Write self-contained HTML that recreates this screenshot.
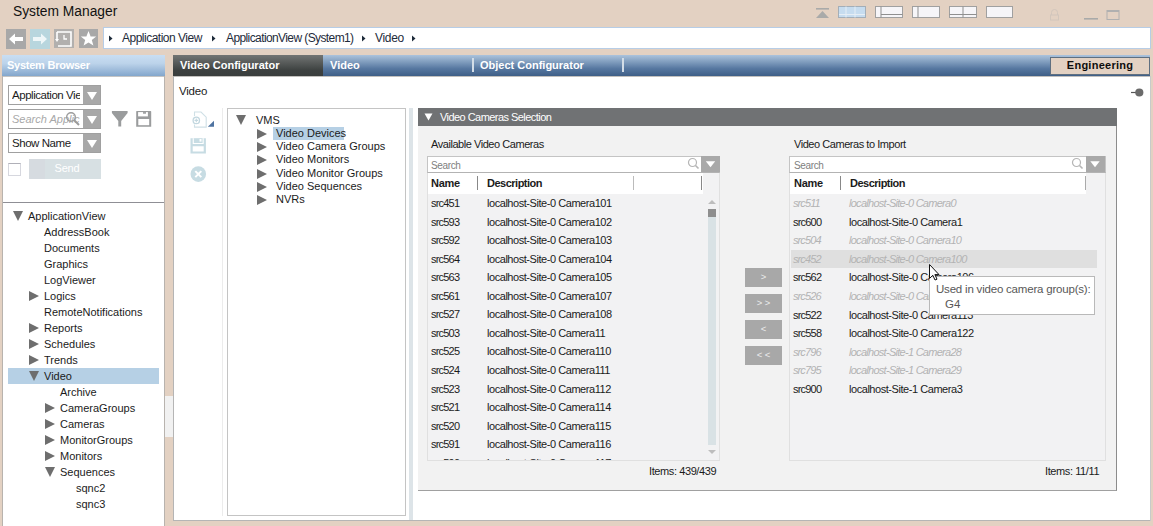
<!DOCTYPE html>
<html><head><meta charset="utf-8">
<style>
*{margin:0;padding:0;box-sizing:border-box}
html,body{width:1153px;height:526px;overflow:hidden}
body{background:#e3d1c2;font-family:"Liberation Sans",sans-serif;color:#1b1b1b;position:relative}
.a{position:absolute}
.t{position:absolute;white-space:nowrap;font-size:11px;line-height:13px}
.tri-r{position:absolute;width:0;height:0;border-top:5.5px solid transparent;border-bottom:5.5px solid transparent;border-left:10px solid #6e6e6e}
.tri-d{position:absolute;width:0;height:0;border-left:5.5px solid transparent;border-right:5.5px solid transparent;border-top:10px solid #6e6e6e}
.gbtn{position:absolute;background:#a8a8a8}
.combo{position:absolute;background:#fff;border:1px solid #a0a0a0}
.combo .dd{position:absolute;right:0;top:0;bottom:0;width:17px;background:#a8a8a8}
.combo .dd:after{content:"";position:absolute;left:3.5px;top:6px;border-left:5px solid transparent;border-right:5px solid transparent;border-top:8px solid #fff}
.row{position:absolute;left:0;height:18px;font-size:11px;line-height:18px;white-space:nowrap;letter-spacing:-0.45px}
.nm{letter-spacing:-0.8px}
.it .nm{letter-spacing:-0.9px}
.it{font-style:italic;color:#b3b3b3;letter-spacing:-0.72px}
</style></head><body>

<!-- Title -->
<div class="t" style="left:13px;top:3px;font-size:13.8px;line-height:17px;color:#111">System Manager</div>

<!-- top-right icons -->
<svg class="a" style="left:814px;top:6px" width="320" height="16" viewBox="0 0 320 16">
  <rect x="2" y="2" width="13" height="1.6" fill="#a9aaa9"/>
  <path d="M2 12 L8.5 5 L15 12 Z" fill="#a9aaa9"/>
  <rect x="24.5" y="0.5" width="27" height="11" fill="#c6dcef" stroke="#a3aeb8"/>
  <line x1="32" y1="0.5" x2="32" y2="11.5" stroke="#e6eef5"/>
  <line x1="41" y1="0.5" x2="41" y2="11.5" stroke="#e6eef5"/>
  <line x1="25" y1="8.5" x2="51" y2="8.5" stroke="#e6eef5"/>
  <rect x="61.5" y="0.5" width="27" height="11" fill="#f6f5f8" stroke="#a0a0a0"/>
  <line x1="67" y1="0.5" x2="67" y2="11.5" stroke="#8f8f8f"/>
  <line x1="67" y1="8.5" x2="88.5" y2="8.5" stroke="#8f8f8f"/>
  <rect x="98.5" y="0.5" width="27" height="11" fill="#f6f5f8" stroke="#a0a0a0"/>
  <line x1="104" y1="0.5" x2="104" y2="11.5" stroke="#8f8f8f"/>
  <rect x="135.5" y="0.5" width="27" height="11" fill="#f6f5f8" stroke="#a0a0a0"/>
  <line x1="149" y1="0.5" x2="149" y2="11.5" stroke="#8f8f8f"/>
  <line x1="135.5" y1="8.5" x2="162.5" y2="8.5" stroke="#8f8f8f"/>
  <rect x="172.5" y="0.5" width="26" height="11" fill="#f6f5f8" stroke="#a0a0a0"/>
  <path d="M237.5 9 v-2.5 a3 3 0 0 1 6 0 v2.5" fill="none" stroke="#d2c6bc" stroke-width="1"/>
  <rect x="236.5" y="9" width="8" height="5" fill="none" stroke="#d2c6bc"/>
  <rect x="270" y="12" width="14" height="1.6" fill="#a9aaa9"/>
  <rect x="293" y="4.5" width="12" height="9" fill="none" stroke="#b0b0b0"/>
  <rect x="293" y="4" width="12" height="2" fill="#b0b0b0"/>
</svg>

<!-- nav buttons -->
<div class="gbtn" style="left:6px;top:29px;width:20px;height:20px"></div>
<svg class="a" style="left:6px;top:29px" width="20" height="20"><path d="M3 10 L9 4.5 V8 H17 V12 H9 V15.5 Z" fill="#fff"/></svg>
<div class="gbtn" style="left:30px;top:29px;width:20px;height:20px;background:#b8d6de"></div>
<svg class="a" style="left:30px;top:29px" width="20" height="20"><path d="M17 10 L11 4.5 V8 H3 V12 H11 V15.5 Z" fill="#eef6f8"/></svg>
<div class="gbtn" style="left:54px;top:29px;width:20px;height:19px;background:#b2b0ae"></div>
<svg class="a" style="left:54px;top:29px" width="20" height="20"><path d="M3 3 H17 V17 H4" fill="none" stroke="#fff" stroke-width="1.6"/><path d="M3 3 V11" stroke="#fff" stroke-width="1.6"/><path d="M1 10 L5 10 L3 13Z" fill="#fff"/><path d="M10 6 V10 H13" fill="none" stroke="#fff" stroke-width="1.3"/></svg>
<div class="gbtn" style="left:79px;top:29px;width:19px;height:19px"></div>
<svg class="a" style="left:79px;top:29px" width="19" height="19"><path d="M9.5 2 L11.6 7.4 L17.2 7.5 L12.8 11 L14.4 16.6 L9.5 13.4 L4.6 16.6 L6.2 11 L1.8 7.5 L7.4 7.4 Z" fill="#fff"/></svg>

<!-- address bar -->
<div class="a" style="left:103px;top:27px;width:1048px;height:22px;background:#fff;border:1px solid #b7cde6"></div>
<svg class="a" style="left:107px;top:34px" width="310" height="9">
  <path d="M2 1.5 L5.5 4.5 L2 7.5Z" fill="#1d2a3a"/>
  <path d="M105 1.5 L108.5 4.5 L105 7.5Z" fill="#1d2a3a"/>
  <path d="M255 1.5 L258.5 4.5 L255 7.5Z" fill="#1d2a3a"/>
  <path d="M305 1.5 L308.5 4.5 L305 7.5Z" fill="#1d2a3a"/>
</svg>
<div class="t" style="left:122px;top:31px;font-size:12px;line-height:14px;letter-spacing:-0.5px;color:#1e2b3b">Application View</div>
<div class="t" style="left:226px;top:31px;font-size:12px;line-height:14px;letter-spacing:-0.6px;color:#1e2b3b">ApplicationView (System1)</div>
<div class="t" style="left:375px;top:31px;font-size:12px;line-height:14px;letter-spacing:-0.3px;color:#1e2b3b">Video</div>

<!-- ============ System Browser ============ -->
<div class="a" style="left:2px;top:55px;width:163px;height:21px;background:linear-gradient(#c9def3 0%,#bcd3ea 40%,#83a6cc 100%)"></div>
<div class="t" style="left:7px;top:58px;font-size:11px;line-height:14px;font-weight:bold;color:#fff;letter-spacing:-0.25px">System Browser</div>
<div class="a" style="left:2px;top:76px;width:163px;height:460px;background:#fff;border-left:1px solid #b8b3ae;border-right:1px solid #b8b3ae"></div>

<div class="a" style="left:3px;top:76px;width:161px;height:1px;background:#c4c4c4"></div>
<div class="combo" style="left:8px;top:85px;width:93px;height:20px"><div class="dd"></div></div>
<div class="t" style="left:12px;top:88px;font-size:11.5px;line-height:14px;letter-spacing:-0.45px;width:68px;overflow:hidden">Application View</div>
<div class="combo" style="left:8px;top:109px;width:93px;height:20px"><div class="dd"></div></div>
<div class="t" style="left:12px;top:112px;font-size:11px;line-height:14px;font-style:italic;color:#a8a8a8;width:70px;overflow:hidden">Search Applic</div>
<svg class="a" style="left:64px;top:110px" width="18" height="18"><circle cx="7" cy="7" r="4.3" fill="none" stroke="#9c9c9c" stroke-width="1.4"/><path d="M10 10 L15 15" stroke="#9c9c9c" stroke-width="2"/></svg>
<svg class="a" style="left:111px;top:111px" width="42" height="17">
  <path d="M0.9 0 H16.6 V2 L10.2 10 V15.6 H7.3 V10 L0.9 2 Z" fill="#9a9c9d"/>
  <path d="M25.6 0 H39.6 L40.2 0.6 V15.8 H25.2 V0.4 Z" fill="#9a9c9d"/>
  <rect x="27.1" y="1.1" width="9.8" height="4.3" fill="#fff"/>
  <rect x="32" y="1.1" width="3" height="1.6" fill="#9a9c9d"/>
  <rect x="27.3" y="8" width="10.9" height="6.2" fill="#fff"/>
</svg>
<div class="combo" style="left:8px;top:133px;width:93px;height:20px"><div class="dd"></div></div>
<div class="t" style="left:12px;top:136px;font-size:11.5px;line-height:14px;letter-spacing:-0.45px">Show Name</div>
<div class="a" style="left:8px;top:163px;width:13px;height:13px;border:1px solid #d6d7de;border-top-color:#b0b0b8;background:#fff"></div>
<div class="a" style="left:29px;top:159px;width:72px;height:20px;background:linear-gradient(90deg,#d6dbe0 22%,#d7e0e3 22%)"></div>
<div class="t" style="left:31px;top:161px;width:72px;text-align:center;font-size:11px;line-height:14px;color:#fff;letter-spacing:-0.2px">Send</div>

<div class="a" style="left:3px;top:202px;width:161px;height:1px;background:#8f8f95"></div>

<!-- SB tree -->
<div class="a" style="left:8px;top:368px;width:151px;height:16px;background:#b6d0e5"></div>
<div class="tri-d" style="left:12.5px;top:211px"></div>
<div class="t" style="left:28px;top:210px">ApplicationView</div>
<div class="t" style="left:44px;top:226px">AddressBook</div>
<div class="t" style="left:44px;top:242px">Documents</div>
<div class="t" style="left:44px;top:258px">Graphics</div>
<div class="t" style="left:44px;top:274px">LogViewer</div>
<div class="tri-r" style="left:29px;top:291px"></div>
<div class="t" style="left:44px;top:290px">Logics</div>
<div class="t" style="left:44px;top:306px">RemoteNotifications</div>
<div class="tri-r" style="left:29px;top:323px"></div>
<div class="t" style="left:44px;top:322px">Reports</div>
<div class="tri-r" style="left:29px;top:339px"></div>
<div class="t" style="left:44px;top:338px">Schedules</div>
<div class="tri-r" style="left:29px;top:355px"></div>
<div class="t" style="left:44px;top:354px">Trends</div>
<div class="tri-d" style="left:29px;top:371px"></div>
<div class="t" style="left:44px;top:370px">Video</div>
<div class="t" style="left:60px;top:386px">Archive</div>
<div class="tri-r" style="left:45px;top:403px"></div>
<div class="t" style="left:60px;top:402px">CameraGroups</div>
<div class="tri-r" style="left:45px;top:419px"></div>
<div class="t" style="left:60px;top:418px">Cameras</div>
<div class="tri-r" style="left:45px;top:435px"></div>
<div class="t" style="left:60px;top:434px">MonitorGroups</div>
<div class="tri-r" style="left:45px;top:451px"></div>
<div class="t" style="left:60px;top:450px">Monitors</div>
<div class="tri-d" style="left:45px;top:467px"></div>
<div class="t" style="left:60px;top:466px">Sequences</div>
<div class="t" style="left:76px;top:482px">sqnc2</div>
<div class="t" style="left:76px;top:498px">sqnc3</div>

<!-- splitter handle -->
<div class="a" style="left:165px;top:396px;width:8px;height:41px;background:#f1f1f1"></div>

<!-- ============ Main panel ============ -->
<div class="a" style="left:173px;top:55px;width:977px;height:21px;background:linear-gradient(#abc3dc,#5677a0 65%,#3f5f87)"></div>
<div class="a" style="left:173px;top:55px;width:150px;height:21px;background:linear-gradient(#727574,#3c403f 75%,#3a3e3d)"></div>
<div class="t" style="left:180px;top:58px;font-size:11px;line-height:14px;font-weight:bold;color:#fff;letter-spacing:0px">Video Configurator</div>
<div class="t" style="left:330px;top:58px;font-size:11px;line-height:14px;font-weight:bold;color:#fff;letter-spacing:0px">Video</div>
<div class="a" style="left:472px;top:58px;width:1.5px;height:14px;background:#d3dde7"></div>
<div class="t" style="left:480px;top:58px;font-size:11px;line-height:14px;font-weight:bold;color:#fff;letter-spacing:0px">Object Configurator</div>
<div class="a" style="left:622px;top:58px;width:1.5px;height:14px;background:#d3dde7"></div>
<div class="a" style="left:1050px;top:57px;width:100px;height:18px;background:#e3d1c2;border:1px solid #5f6f80"></div>
<div class="t" style="left:1050px;top:58px;width:100px;text-align:center;font-size:11px;line-height:14px;font-weight:bold;color:#0d0d0d;letter-spacing:0.25px">Engineering</div>

<div class="a" style="left:173px;top:76px;width:977px;height:445px;background:#fff;border-left:1px solid #b5b5b5;border-bottom:1px solid #b5b5b5"></div>
<div class="a" style="left:174px;top:76px;width:976px;height:1px;background:#c2c0bd"></div>
<div class="t" style="left:179px;top:84px;font-size:11.5px;line-height:14px;letter-spacing:-0.2px">Video</div>
<svg class="a" style="left:1130px;top:86px" width="15" height="13"><path d="M1 6.5 H6" stroke="#555" stroke-width="1.2"/><circle cx="9.3" cy="6.5" r="4.1" fill="#6a6a6a"/></svg>
<div class="a" style="left:1150px;top:76px;width:1px;height:445px;background:#cacaca"></div>

<!-- left action icons -->
<svg class="a" style="left:188px;top:110px" width="30" height="75">
  <path d="M6.5 6 V2 H13 L18.2 7.2 V17.1 H6.5 V14.5" fill="none" stroke="#cfe0e6" stroke-width="1.1"/>
  <circle cx="8.3" cy="10.4" r="3.2" fill="#fff" stroke="#c2d7df" stroke-width="1.3"/>
  <path d="M8.3 8.6 V12.2 M6.5 10.4 H10.1" stroke="#c2d7df" stroke-width="1.1"/>
  <path d="M26 10.8 V16.8 H19.8 Z" fill="#4f73a1"/>
  <path d="M2.5 28.2 H17.9 V43.5 H2.5 Z M4.7 36.3 V41.4 H15.7 V36.3 Z" fill="#c7dce3" fill-rule="evenodd"/>
  <rect x="4.7" y="28.2" width="11" height="5.8" fill="#fff"/>
  <rect x="5.8" y="28.2" width="8.8" height="4.8" fill="#c7dce3"/>
  <rect x="11.5" y="29" width="2" height="2.6" fill="#fff"/>
  <circle cx="10.3" cy="64.1" r="7.8" fill="#c7dce3"/>
  <path d="M7.3 61.1 L13.3 67.1 M13.3 61.1 L7.3 67.1" stroke="#fff" stroke-width="2"/>
</svg>

<!-- VMS tree box -->
<div class="a" style="left:222px;top:108px;width:1px;height:408px;background:#ececec"></div>
<div class="a" style="left:227px;top:108px;width:179px;height:408px;border:1px solid #c4c4c4;background:#fff"></div>
<div class="a" style="left:409px;top:108px;width:4px;height:412px;background:#dde4e8"></div>
<div class="tri-d" style="left:236px;top:115px"></div>
<div class="t" style="left:256px;top:113px;font-size:11px;line-height:14px">VMS</div>
<div class="a" style="left:273px;top:127px;width:71px;height:13px;background:#b6d0e5"></div>
<div class="tri-r" style="left:257px;top:129px"></div>
<div class="t" style="left:276px;top:126px;font-size:11px;line-height:14px">Video Devices</div>
<div class="tri-r" style="left:257px;top:142px"></div>
<div class="t" style="left:276px;top:139px;font-size:11px;line-height:14px">Video Camera Groups</div>
<div class="tri-r" style="left:257px;top:155px"></div>
<div class="t" style="left:276px;top:152px;font-size:11px;line-height:14px">Video Monitors</div>
<div class="tri-r" style="left:257px;top:169px"></div>
<div class="t" style="left:276px;top:166px;font-size:11px;line-height:14px">Video Monitor Groups</div>
<div class="tri-r" style="left:257px;top:182px"></div>
<div class="t" style="left:276px;top:179px;font-size:11px;line-height:14px">Video Sequences</div>
<div class="tri-r" style="left:257px;top:195px"></div>
<div class="t" style="left:276px;top:192px;font-size:11px;line-height:14px">NVRs</div>

<!-- ============ Video Cameras Selection ============ -->
<div class="a" style="left:418px;top:108px;width:699px;height:383px;background:#f2f2f2;border-right:1px solid #8c8c8c;border-bottom:1px solid #a0a0a0"></div>
<div class="a" style="left:418px;top:108px;width:699px;height:18px;background:#707274"></div>
<svg class="a" style="left:424px;top:112px" width="9" height="9"><path d="M0.5 1.5 H8.5 L4.5 8.5Z" fill="#fff"/></svg>
<div class="t" style="left:440px;top:110px;font-size:11px;line-height:14px;color:#fff;letter-spacing:-0.55px">Video Cameras Selection</div>

<!-- Available -->
<div class="t" style="left:431px;top:137px;font-size:11px;line-height:14px;letter-spacing:-0.45px">Available Video Cameras</div>
<div class="a" style="left:427px;top:156px;width:293px;height:305px;background:#f2f2f3;border:1px solid #e0e0e0"></div>
<div class="a" style="left:427px;top:156px;width:293px;height:17px;background:#fff;border:1px solid #c4c4c4;border-bottom-color:#b3b3b3"></div>
<div class="t" style="left:431px;top:158px;font-size:10px;line-height:13px;color:#808080;letter-spacing:-0.35px;margin-top:1px">Search</div>
<svg class="a" style="left:686px;top:157px" width="14" height="14"><circle cx="6.5" cy="5.5" r="4" fill="none" stroke="#b5b5b5" stroke-width="1.2"/><path d="M9.5 8.5 L12.5 11.5" stroke="#b5b5b5" stroke-width="1.6"/></svg>
<div class="a" style="left:701px;top:156px;width:19px;height:16px;background:#a9a9a9"></div>
<svg class="a" style="left:701px;top:156px" width="20" height="17"><path d="M4.8 5.2 H14.2 L9.5 11.2Z" fill="#fff"/></svg>
<div class="a" style="left:428px;top:173px;width:275px;height:21px;background:#fff"></div>
<div class="t" style="left:431px;top:176px;font-size:11px;line-height:14px;font-weight:bold;letter-spacing:-0.3px">Name</div>
<div class="a" style="left:477px;top:176px;width:1px;height:14px;background:#888"></div>
<div class="t" style="left:487px;top:176px;font-size:11px;line-height:14px;font-weight:bold;letter-spacing:-0.5px">Description</div>
<div class="a" style="left:633px;top:176px;width:1px;height:14px;background:#bbb"></div>
<div class="a" style="left:701px;top:176px;width:1px;height:14px;background:#888"></div>
<!-- scrollbar -->
<div class="a" style="left:708px;top:217px;width:8px;height:228px;background:#d9e2e5"></div>
<div class="a" style="left:708px;top:209px;width:8px;height:8px;background:#8e8e8e"></div>
<svg class="a" style="left:706px;top:198px" width="12" height="8"><path d="M2 6 L6 2 L10 6Z" fill="#bdbdbd"/></svg>
<svg class="a" style="left:706px;top:448px" width="12" height="8"><path d="M2 2 L6 6 L10 2Z" fill="#bdbdbd"/></svg>

<div class="a" style="left:428px;top:194px;width:280px;height:266px;overflow:hidden">
  <div class="row" style="top:0px"><span class="a nm" style="left:3px">src451</span><span class="a" style="left:59px">localhost-Site-0 Camera101</span></div>
  <div class="row" style="top:18.55px"><span class="a nm" style="left:3px">src593</span><span class="a" style="left:59px">localhost-Site-0 Camera102</span></div>
  <div class="row" style="top:37.1px"><span class="a nm" style="left:3px">src592</span><span class="a" style="left:59px">localhost-Site-0 Camera103</span></div>
  <div class="row" style="top:55.65px"><span class="a nm" style="left:3px">src564</span><span class="a" style="left:59px">localhost-Site-0 Camera104</span></div>
  <div class="row" style="top:74.2px"><span class="a nm" style="left:3px">src563</span><span class="a" style="left:59px">localhost-Site-0 Camera105</span></div>
  <div class="row" style="top:92.75px"><span class="a nm" style="left:3px">src561</span><span class="a" style="left:59px">localhost-Site-0 Camera107</span></div>
  <div class="row" style="top:111.3px"><span class="a nm" style="left:3px">src527</span><span class="a" style="left:59px">localhost-Site-0 Camera108</span></div>
  <div class="row" style="top:129.85px"><span class="a nm" style="left:3px">src503</span><span class="a" style="left:59px">localhost-Site-0 Camera11</span></div>
  <div class="row" style="top:148.4px"><span class="a nm" style="left:3px">src525</span><span class="a" style="left:59px">localhost-Site-0 Camera110</span></div>
  <div class="row" style="top:166.95px"><span class="a nm" style="left:3px">src524</span><span class="a" style="left:59px">localhost-Site-0 Camera111</span></div>
  <div class="row" style="top:185.5px"><span class="a nm" style="left:3px">src523</span><span class="a" style="left:59px">localhost-Site-0 Camera112</span></div>
  <div class="row" style="top:204.05px"><span class="a nm" style="left:3px">src521</span><span class="a" style="left:59px">localhost-Site-0 Camera114</span></div>
  <div class="row" style="top:222.6px"><span class="a nm" style="left:3px">src520</span><span class="a" style="left:59px">localhost-Site-0 Camera115</span></div>
  <div class="row" style="top:241.15px"><span class="a nm" style="left:3px">src591</span><span class="a" style="left:59px">localhost-Site-0 Camera116</span></div>
  <div class="row" style="top:259.7px"><span class="a nm" style="left:3px">src590</span><span class="a" style="left:59px">localhost-Site-0 Camera117</span></div>
</div>
<div class="t" style="left:649px;top:465px;font-size:11px;line-height:13px;letter-spacing:-0.4px">Items: 439/439</div>

<!-- move buttons -->
<div class="gbtn" style="left:745px;top:268px;width:37px;height:19px"></div>
<div class="t" style="left:745px;top:270px;width:37px;text-align:center;color:#ececec;font-size:9.5px">&gt;</div>
<div class="gbtn" style="left:745px;top:294px;width:37px;height:19px"></div>
<div class="t" style="left:745px;top:296px;width:37px;text-align:center;color:#ececec;font-size:9.5px">&gt; &gt;</div>
<div class="gbtn" style="left:745px;top:320px;width:37px;height:19px"></div>
<div class="t" style="left:745px;top:322px;width:37px;text-align:center;color:#ececec;font-size:9.5px">&lt;</div>
<div class="gbtn" style="left:745px;top:346px;width:37px;height:19px"></div>
<div class="t" style="left:745px;top:348px;width:37px;text-align:center;color:#ececec;font-size:9.5px">&lt; &lt;</div>

<!-- To import -->
<div class="t" style="left:794px;top:137px;font-size:11px;line-height:14px;letter-spacing:-0.45px">Video Cameras to Import</div>
<div class="a" style="left:789px;top:156px;width:317px;height:305px;background:#f2f2f3;border:1px solid #e0e0e0"></div>
<div class="a" style="left:789px;top:156px;width:317px;height:17px;background:#fff;border:1px solid #c4c4c4;border-bottom-color:#b3b3b3"></div>
<div class="t" style="left:794px;top:158px;font-size:10px;line-height:13px;color:#808080;letter-spacing:-0.35px;margin-top:1px">Search</div>
<svg class="a" style="left:1070px;top:157px" width="14" height="14"><circle cx="6.5" cy="5.5" r="4" fill="none" stroke="#b5b5b5" stroke-width="1.2"/><path d="M9.5 8.5 L12.5 11.5" stroke="#b5b5b5" stroke-width="1.6"/></svg>
<div class="a" style="left:1086px;top:156px;width:19px;height:16px;background:#a9a9a9"></div>
<svg class="a" style="left:1086px;top:156px" width="19" height="17"><path d="M4.3 5.2 H13.7 L9 11.2Z" fill="#fff"/></svg>
<div class="a" style="left:790px;top:173px;width:296px;height:21px;background:#fff"></div>
<div class="t" style="left:794px;top:176px;font-size:11px;line-height:14px;font-weight:bold;letter-spacing:-0.3px">Name</div>
<div class="a" style="left:840px;top:176px;width:1px;height:14px;background:#888"></div>
<div class="t" style="left:850px;top:176px;font-size:11px;line-height:14px;font-weight:bold;letter-spacing:-0.5px">Description</div>
<div class="a" style="left:1085px;top:176px;width:1px;height:14px;background:#aaa"></div>

<div class="a" style="left:791px;top:250px;width:306px;height:18px;background:#dfdfdf"></div>
<div class="a" style="left:790px;top:194px;width:310px;height:265px;overflow:hidden">
  <div class="row it" style="top:0px"><span class="a nm" style="left:3px">src511</span><span class="a" style="left:59px">localhost-Site-0 Camera0</span></div>
  <div class="row" style="top:18.6px"><span class="a nm" style="left:3px">src600</span><span class="a" style="left:59px">localhost-Site-0 Camera1</span></div>
  <div class="row it" style="top:37.2px"><span class="a nm" style="left:3px">src504</span><span class="a" style="left:59px">localhost-Site-0 Camera10</span></div>
  <div class="row it" style="top:55.8px"><span class="a nm" style="left:3px">src452</span><span class="a" style="left:59px">localhost-Site-0 Camera100</span></div>
  <div class="row" style="top:74.4px"><span class="a nm" style="left:3px">src562</span><span class="a" style="left:59px">localhost-Site-0 Camera106</span></div>
  <div class="row it" style="top:93px"><span class="a nm" style="left:3px">src526</span><span class="a" style="left:59px">localhost-Site-0 Camera113</span></div>
  <div class="row" style="top:111.6px"><span class="a nm" style="left:3px">src522</span><span class="a" style="left:59px">localhost-Site-0 Camera113</span></div>
  <div class="row" style="top:130.2px"><span class="a nm" style="left:3px">src558</span><span class="a" style="left:59px">localhost-Site-0 Camera122</span></div>
  <div class="row it" style="top:148.8px"><span class="a nm" style="left:3px">src796</span><span class="a" style="left:59px">localhost-Site-1 Camera28</span></div>
  <div class="row it" style="top:167.4px"><span class="a nm" style="left:3px">src795</span><span class="a" style="left:59px">localhost-Site-1 Camera29</span></div>
  <div class="row" style="top:186px"><span class="a nm" style="left:3px">src900</span><span class="a" style="left:59px">localhost-Site-1 Camera3</span></div>
</div>
<div class="t" style="left:1045px;top:465px;font-size:11px;line-height:13px;letter-spacing:-0.4px">Items: 11/11</div>

<!-- tooltip -->
<div class="a" style="left:929px;top:276px;width:166px;height:39px;background:#fff;border:1px solid #b9b9b9"></div>
<div class="t" style="left:936px;top:282px;font-size:11.5px;line-height:14px;color:#585858;letter-spacing:-0.2px">Used in video camera group(s):</div>
<div class="t" style="left:945px;top:297px;font-size:11.5px;line-height:14px;color:#585858">G4</div>
<!-- cursor -->
<svg class="a" style="left:928px;top:263px" width="14" height="20"><path d="M1.5 1.5 V15.5 L4.8 12.3 L7 17 L9 16.2 L6.9 11.6 H11 Z" fill="#fff" stroke="#111" stroke-width="1"/></svg>

</body></html>
